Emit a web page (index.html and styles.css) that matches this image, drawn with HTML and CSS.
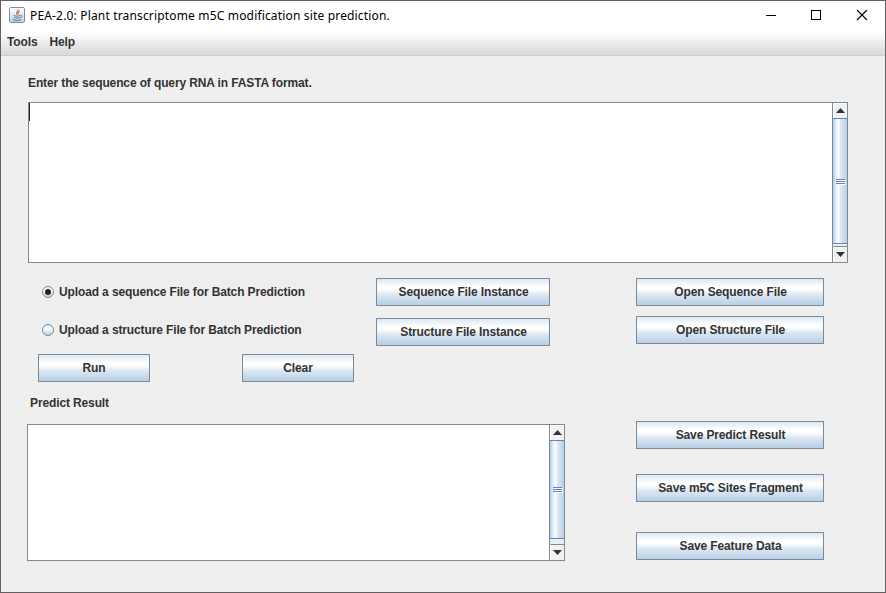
FILE: index.html
```html
<!DOCTYPE html>
<html lang="en">
<head>
<meta charset="utf-8">
<title>PEA-2.0</title>
<link rel="stylesheet" href="styles.css">
</head>
<body>
<div class="window">
  <header class="titlebar">
    <svg class="app-icon" width="17" height="17" viewBox="0 0 17 17">
      <defs><linearGradient id="ig" x1="0" y1="0" x2="0" y2="1"><stop offset="0" stop-color="#fff"/><stop offset="1" stop-color="#c5d3e0"/></linearGradient></defs>
      <rect x=".5" y=".5" width="15" height="15" rx="1.2" fill="url(#ig)" stroke="#7a8fa6"/>
      <path d="M9 2.200c1 2-2.800 2.500-1.200 5.300M10.800 4.300c-2.200.900-2.200 1.800-1.300 3.500" fill="none" stroke="#d9703c" stroke-width="1.200"/>
      <path d="M4.500 8.500c2 .8 5 .8 6.500 0M5 10.500c2 .7 4 .7 5.800 0M11.500 8.300c2.300-.3 1.800 2-.5 2.500M3.500 12.500c2.500 1.200 7 1.200 9 0" fill="none" stroke="#55789b" stroke-width="1"/>
    </svg>
    <h1 class="title">PEA-2.0: Plant transcriptome m5C modification site prediction.</h1>
    <div class="controls">
      <svg width="46" height="30" viewBox="0 0 46 30"><path d="M19 14.500h10" stroke="#000"/></svg>
      <svg width="46" height="30" viewBox="0 0 46 30"><rect x="18.500" y="9.500" width="9" height="9" fill="none" stroke="#000"/></svg>
      <svg width="46" height="30" viewBox="0 0 46 30"><path d="M18 9l10 10M28 9l-10 10" stroke="#000" stroke-width="1.100"/></svg>
    </div>
  </header>
  <nav class="menubar"><span>Tools</span><span>Help</span></nav>
  <main class="content">
    <label class="query-label">Enter the sequence of query RNA in FASTA format.</label>
    <section class="scrollpane query">
      <div class="text"><span class="caret"></span></div>
      <div class="scrollbar">
        <div class="arrow"><svg width="9" height="5" viewBox="0 0 9 5"><path d="M0 5l4.500-5L9 5z" fill="#333"/></svg></div>
        <div class="thumb"><svg width="10" height="6" viewBox="0 0 10 6"><path d="M0 .5h9M0 2.500h9M0 4.500h9" stroke="#6382bf"/><path d="M1 1.500h9M1 3.500h9M1 5.500h9" stroke="#fff"/></svg></div>
        <div class="arrow down"><svg width="9" height="5" viewBox="0 0 9 5"><path d="M0 0l4.500 5L9 0z" fill="#333"/></svg></div>
      </div>
    </section>
    <section class="options">
      <div class="left">
        <label class="radio"><i class="dot on"></i><span>Upload a sequence File for Batch Prediction</span></label>
        <label class="radio"><i class="dot"></i><span>Upload a structure File for Batch Prediction</span></label>
        <div class="actions"><button>Run</button><button>Clear</button></div>
      </div>
      <div class="instances"><button>Sequence File Instance</button><button>Structure File Instance</button></div>
      <div class="open"><button>Open Sequence File</button><button>Open Structure File</button></div>
    </section>
    <section class="results">
      <div class="result-col">
        <label class="result-label">Predict Result</label>
        <div class="scrollpane result">
          <div class="text"></div>
          <div class="scrollbar">
            <div class="arrow"><svg width="9" height="5" viewBox="0 0 9 5"><path d="M0 5l4.500-5L9 5z" fill="#333"/></svg></div>
            <div class="thumb"><svg width="10" height="6" viewBox="0 0 10 6"><path d="M0 .5h9M0 2.500h9M0 4.500h9" stroke="#6382bf"/><path d="M1 1.500h9M1 3.500h9M1 5.500h9" stroke="#fff"/></svg></div>
            <div class="arrow down"><svg width="9" height="5" viewBox="0 0 9 5"><path d="M0 0l4.500 5L9 0z" fill="#333"/></svg></div>
          </div>
        </div>
      </div>
      <div class="save"><button>Save Predict Result</button><button>Save m5C Sites Fragment</button><button>Save Feature Data</button></div>
    </section>
  </main>
</div>
</body>
</html>
```
FILE: styles.css
```css
* { box-sizing: border-box; }
body { margin: 0; }
.window {
  width: 886px;
  height: 593px;
  display: flex;
  flex-direction: column;
  border: 1px solid #655f63;
  background: #efefef;
  color: #333;
  font: bold 12px/20px "Liberation Sans", Arial, sans-serif;
  letter-spacing: -0.125px;
  white-space: nowrap;
  overflow: hidden;
}
.titlebar {
  display: flex;
  align-items: center;
  height: 30px;
  flex: none;
  padding-left: 8px;
  background: #fff;
}
.app-icon { margin: -1px 4px 0 0; }
.title {
  margin: 0;
  color: #000;
  font: 12px/20px "Noto Sans", sans-serif;
  letter-spacing: 0.165px;
}
.controls { display: flex; margin-left: auto; }
.controls svg { display: block; }
.menubar {
  display: flex;
  gap: 12px;
  height: 25px;
  flex: none;
  padding: 1px 6px 0;
  background: linear-gradient(#fff 5%, #dadada 95%);
  border-bottom: 1px solid #ccc;
}
.content { padding: 17px 0 0 26px; }
.query-label { display: block; padding-left: 1px; }
.scrollpane {
  display: flex;
  border: 1px solid #7a8a99;
  background: #fff;
}
.query { width: 820px; height: 161px; margin: 9px 0 0 1px; }
.result { width: 538px; height: 137px; margin-top: 11px; }
.text { flex: 1; }
.caret { display: block; width: 1px; height: 18px; background: #222; }
.scrollbar {
  display: flex;
  flex-direction: column;
  width: 15px;
  border-left: 1px solid #7a8a99;
  background: #eee;
}
.arrow {
  display: flex;
  align-items: center;
  justify-content: center;
  height: 15px;
  flex: none;
  padding: 0 1px 2px 0;
  background: #f1f1f1;
  border: 1px solid #fff;
  border-width: 1px 0 0 1px;
}
.arrow.down { height: 16px; margin-top: auto; padding-bottom: 0; border-top: 1px solid #7a8a99; }
.thumb {
  display: flex;
  align-items: center;
  justify-content: center;
  padding: 2px 0 0 1px;
  border: 1px solid #6382bf;
  border-width: 1px 0;
  background: linear-gradient(90deg, #a9c4e8 0, #cfe0f2 12%, #fff 38%, #dce8f5 55%, #b8cfe5);
}
.query .thumb { height: 126px; }
.result .thumb { height: 99px; }
.result .thumb { padding-top: 0; }
.options { display: flex; align-items: flex-start; margin: 10px 0 0 11px; }
.left { width: 316px; }
.radio {
  display: flex;
  align-items: center;
  height: 38px;
  padding-left: 4px;
  background: #eee;
}
.dot {
  display: flex;
  align-items: center;
  justify-content: center;
  width: 12px;
  height: 12px;
  margin-right: 5px;
  border: 1px solid #7a8a99;
  border-radius: 50%;
  background: linear-gradient(#e7f0f9, #fff 35%, #b8cfe5);
}
.dot.on::before { content: ""; width: 6px; height: 6px; border-radius: 50%; background: #222; }
.actions { display: flex; justify-content: space-between; margin-top: 5px; }
.actions button { width: 112px; padding: 0; }
.instances, .open, .save { display: flex; flex-direction: column; }
.instances { width: 174px; margin: 5px 0 0 22px; gap: 12px; }
.open { width: 188px; margin: 5px 0 0 86px; gap: 10px; }
button {
  height: 28px;
  padding: 0 0 0 1px;
  border: 1px solid #7a8a99;
  border-radius: 0;
  background: linear-gradient(#dde8f3, #fff 30%, #fff 40%, #dce8f3 60%, #b8cfe5);
  color: #333;
  font: inherit;
  letter-spacing: inherit;
  line-height: 26px;
}
.results { display: flex; align-items: flex-start; margin-top: 11px; }
.result-label { display: block; padding-left: 3px; }
.save { width: 188px; margin: 28px 0 0 71px; }
.save button + button { margin-top: 25px; }
.save button:last-child { margin-top: 30px; }
```
